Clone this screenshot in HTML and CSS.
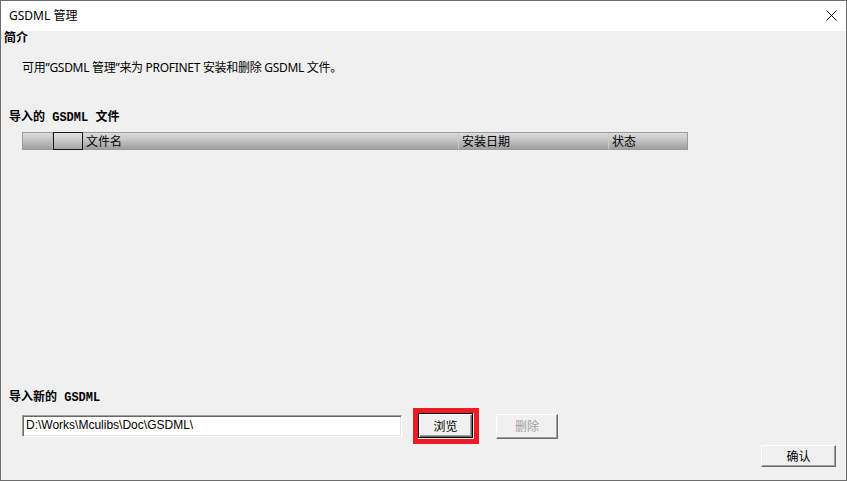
FILE: index.html
```html
<!DOCTYPE html>
<html lang="zh-CN">
<head>
<meta charset="utf-8">
<title>GSDML 管理</title>
<link rel="stylesheet" href="styles.css">
</head>
<body>
<div class="window">
  <div class="titlebar">
    <span class="title">GSDML 管理</span>
    <svg class="close" width="12" height="12" viewBox="0 0 12 12"><path d="M0.5 0.5 L10.5 10.5 M10.5 0.5 L0.5 10.5" stroke="#000" stroke-width="1" fill="none"/></svg>
  </div>
  <div class="content">
    <div class="sec sec-intro">简介</div>
    <div class="desc">可用”GSDML 管理”来为 PROFINET 安装和删除 GSDML 文件。</div>
    <div class="sec sec-files">导入的 GSDML 文件</div>
    <div class="thead">
      <div class="th th-blank"></div>
      <div class="th th-check"></div>
      <div class="th th-name">文件名</div>
      <div class="th th-date">安装日期</div>
      <div class="th th-status">状态</div>
    </div>
    <div class="bottom">
      <div class="sec sec-new">导入新的 GSDML</div>
      <div class="import-row">
        <div class="path">D:\Works\Mculibs\Doc\GSDML\</div>
        <div class="highlight"><button class="btn btn-default">浏览</button></div>
        <button class="btn btn-disabled">删除</button>
      </div>
      <div class="confirm-row">
        <button class="btn btn-ok">确认</button>
      </div>
    </div>
  </div>
</div>
</body>
</html>
```

FILE: styles.css
```css
html, body {
  margin: 0;
  padding: 0;
  background: #f0f0f0;
}
.window {
  width: 847px;
  height: 481px;
  box-sizing: border-box;
  border: 1px solid #6d6d6d;
  display: flex;
  flex-direction: column;
  background: #f0f0f0;
  font-family: "Noto Sans", "Noto Sans CJK SC", sans-serif;
}
.titlebar {
  height: 30px;
  background: #fff;
  display: flex;
  align-items: center;
  justify-content: space-between;
  padding-left: 8px;
  padding-right: 8px;
}
.title {
  font-size: 12px;
  color: #000;
  line-height: 16px;
}
.close {
  display: block;
  margin-top: -1px;
}
.content {
  flex: 1;
  display: flex;
  flex-direction: column;
  padding-bottom: 13px;
}
.sec {
  font-family: "Liberation Mono", "Noto Sans CJK SC", monospace;
  font-weight: bold;
  font-size: 12px;
  line-height: 16px;
  color: #000;
}
.sec-intro {
  padding-left: 3px;
}
.desc {
  margin-top: 13px;
  padding-left: 21px;
  font-family: "Noto Sans", "Noto Sans CJK SC", sans-serif;
  font-size: 12px;
  letter-spacing: -0.3px;
  line-height: 16px;
  color: #000;
}
.sec-files {
  margin-top: 34px;
  padding-left: 8px;
}
.thead {
  margin-top: 6px;
  margin-left: 21px;
  width: 666px;
  height: 18px;
  box-sizing: border-box;
  border: 1px solid #9a9a9a;
  display: flex;
  background: linear-gradient(#dcdcdc, #c4c4c4 45%, #9e9e9e);
}
.th {
  height: 16px;
  box-sizing: border-box;
  font-family: "Noto Sans CJK SC", sans-serif;
  font-size: 12px;
  line-height: 16px;
  color: #000;
  padding-left: 3px;
}
.th-blank {
  width: 30px;
  border-right: 1px solid #bdbdbd;
}
.th-check {
  width: 30px;
  border: 1px solid #1a1a1a;
  height: 18px;
  margin-top: -1px;
  background: linear-gradient(#e2e2e2, #cacaca 45%, #a6a6a6);
}
.th-name {
  width: 376px;
  border-right: 1px solid #c8c8c8;
}
.th-date {
  width: 150px;
  border-right: 1px solid #c8c8c8;
}
.th-status {
  flex: 1;
}
.bottom {
  margin-top: auto;
  display: flex;
  flex-direction: column;
}
.sec-new {
  padding-left: 8px;
}
.import-row {
  margin-top: 2px;
  display: flex;
  align-items: center;
  height: 36px;
}
.path {
  margin-left: 21px;
  width: 380px;
  height: 22px;
  box-sizing: border-box;
  background: #fff;
  border: 1px solid;
  border-color: #a0a0a0 #ffffff #ffffff #a0a0a0;
  box-shadow: inset 1px 1px #696969, inset -1px -1px #e3e3e3;
  font-family: "Liberation Sans", sans-serif;
  font-size: 12px;
  line-height: 19px;
  padding-left: 3px;
  color: #000;
  white-space: nowrap;
}
.highlight {
  margin-left: 11px;
  border: 5px solid #ed1c24;
  padding: 0 1px 1px 0;
  display: flex;
}
.btn {
  box-sizing: border-box;
  margin: 0;
  background: #f0f0f0;
  font-family: "Noto Sans CJK SC", sans-serif;
  font-size: 12px;
  line-height: 16px;
  color: #000;
  padding: 0;
  border: 1px solid;
  border-color: #ffffff #696969 #696969 #ffffff;
  box-shadow: inset -1px -1px #a0a0a0;
}
.btn-default {
  width: 55px;
  height: 25px;
  border-color: #000;
  box-shadow: inset 1px 1px #fff, inset -1px -1px #696969, inset -2px -2px #a0a0a0;
}
.btn-disabled {
  margin-left: 17px;
  width: 62px;
  height: 25px;
  color: #a0a0a0;
}
.confirm-row {
  margin-top: 1px;
  display: flex;
  justify-content: flex-end;
  padding-right: 10px;
}
.btn-ok {
  width: 75px;
  height: 22px;
}
```
